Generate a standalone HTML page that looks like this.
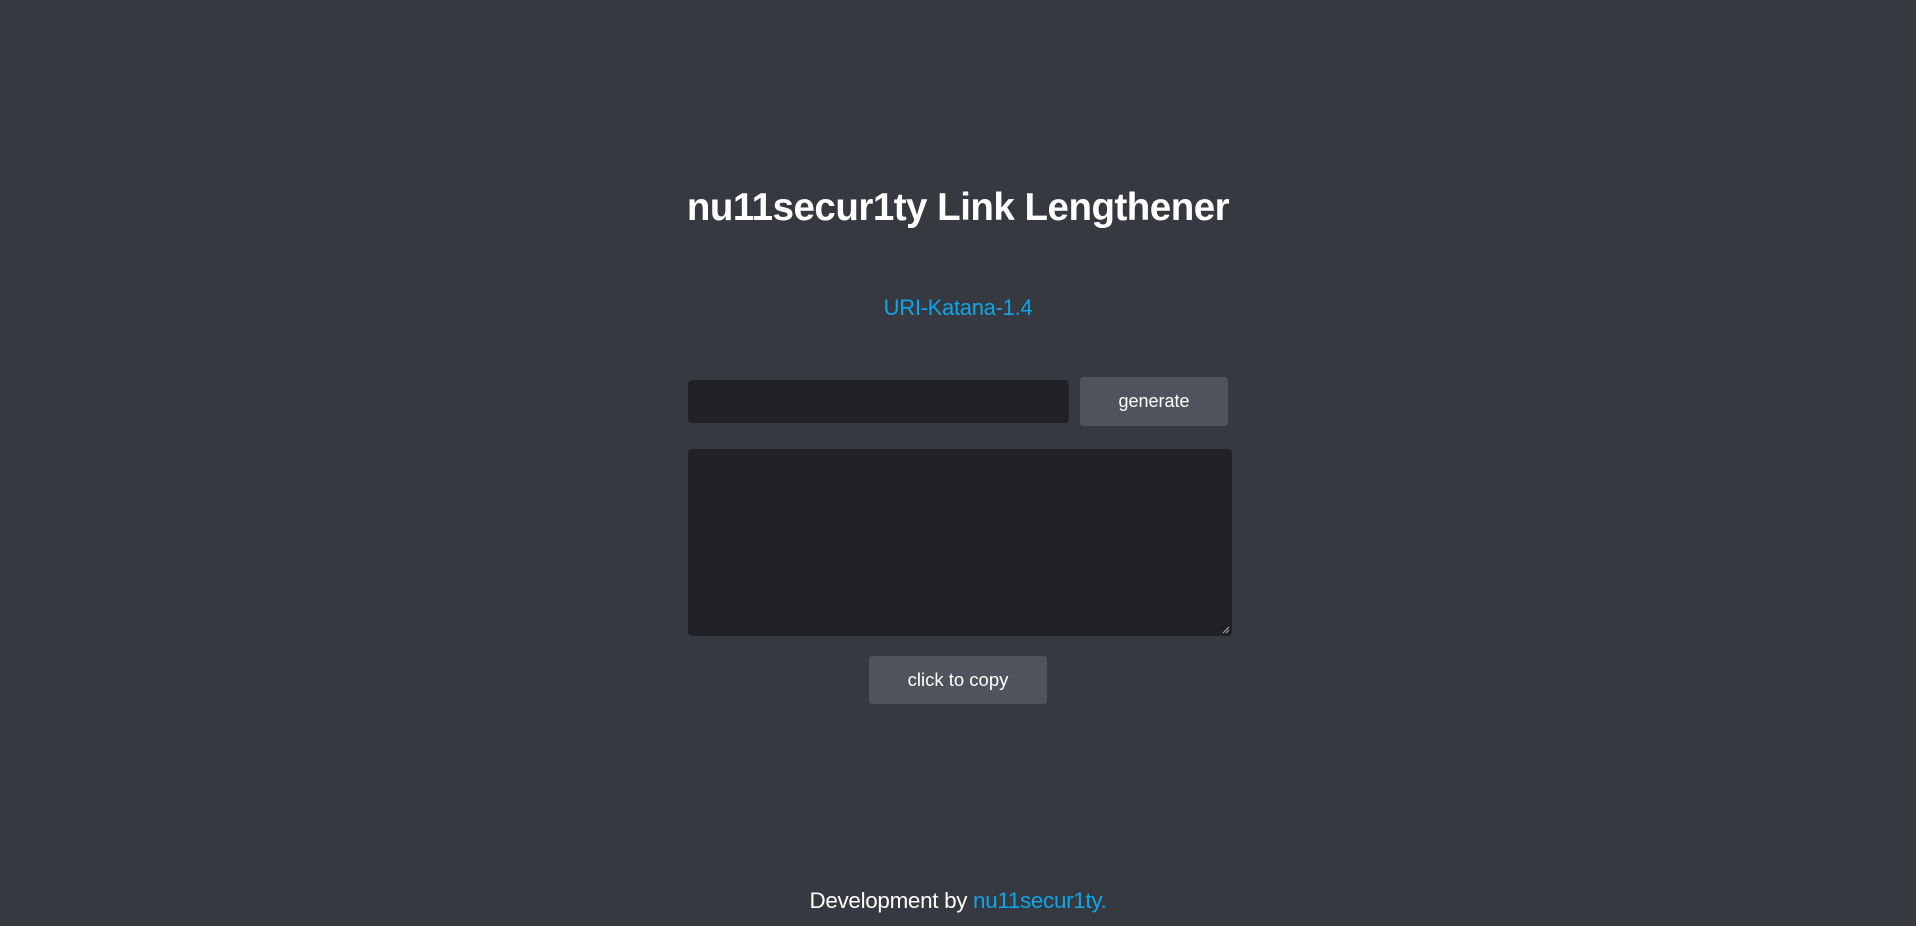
<!DOCTYPE html>
<html><head><meta charset="utf-8"><style>
html,body{margin:0;padding:0;width:1916px;height:926px;background:#36393f;overflow:hidden;font-family:"Liberation Sans",sans-serif;color:#fff}
.a{position:absolute}
h1{position:absolute;left:0;width:1916px;top:185px;margin:0;text-align:center;font-size:38.5px;line-height:46px;font-weight:bold;letter-spacing:-0.5px}
.sub{left:0;width:1916px;top:294px;text-align:center;font-size:22px;line-height:28px;color:#0ea5e9;letter-spacing:-0.3px}
.inp{left:688px;top:380px;width:381px;height:43px;background:#202225;border-radius:4px}
.btn{background:#4f545c;border-radius:3px;text-align:center;font-size:18px;color:#fff}
.gen{left:1080px;top:377px;width:148px;height:49px;line-height:49px}
.ta{left:688px;top:449px;width:544px;height:187px;background:#202225;border-radius:4px}
.cp{left:869px;top:656px;width:178px;height:48px;line-height:48px;font-size:18.5px}
.foot{left:0;width:1916px;top:886px;text-align:center;font-size:22.4px;line-height:30px;letter-spacing:-0.3px}
.foot span{color:#0ea5e9}
</style></head><body>
<h1>nu11secur1ty Link Lengthener</h1>
<div class="a sub">URI-Katana-1.4</div>
<div class="a inp"></div>
<div class="a btn gen">generate</div>
<div class="a ta"><svg class="a" style="right:2px;bottom:2px" width="8" height="8"><path d="M1 7L7 1M4 7L7 4" stroke="#aaa" stroke-width="1"/></svg></div>
<div class="a btn cp">click to copy</div>
<div class="a foot">Development by <span>nu11secur1ty.</span></div>
</body></html>
